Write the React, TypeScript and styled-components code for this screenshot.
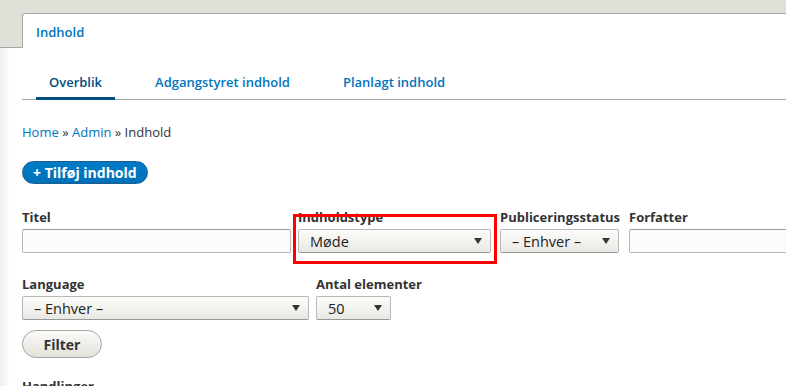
import React from "react";
import styled, { createGlobalStyle } from "styled-components";

const GlobalStyle = createGlobalStyle`
  html, body {
    margin: 0;
    padding: 0;
    background: #ffffff;
    overflow: hidden;
  }
  body {
    font-family: "Open Sans", "DejaVu Sans", sans-serif;
    font-size: 13px;
    color: #333333;
  }
`;

// --- Header ---
const Header = styled.div`
  display: flex;
  background: #e0e0d8;
  padding: 13px 0 0 22px;
  border-bottom: 1px solid #a6a6a6;
`;

const PrimaryTab = styled.a`
  flex: 1;
  height: 35px;
  margin-bottom: -1px;
  display: flex;
  align-items: center;
  padding: 1px 0 0 13px;
  box-sizing: border-box;
  background: #ffffff;
  border-top: 1px solid #a6a6a6;
  border-left: 1px solid #a6a6a6;
  border-top-left-radius: 4px;
  color: #0074bd;
  font-weight: 600;
  text-decoration: none;
`;

// --- Content ---
const Content = styled.div`
  background: linear-gradient(to right, #efefef 0, #ffffff 10px);
  height: 337px;
  padding: 25px 0 0 22px;
  overflow: hidden;
`;

const TabList = styled.div`
  display: flex;
  gap: 27px;
  padding-left: 14px;
  height: 26px;
  border-bottom: 1px solid #a6a6a6;
`;

const SecondaryTab = styled.a<{ $active?: boolean }>`
  display: block;
  padding: 0 13px 5px;
  line-height: 18px;
  margin-bottom: -1px;
  font-weight: 600;
  color: ${(p) => (p.$active ? "#004f80" : "#0074bd")};
  border-bottom: 3px solid ${(p) => (p.$active ? "#004f80" : "transparent")};
  text-decoration: none;
`;

const Breadcrumb = styled.div`
  margin-top: 23px;
  line-height: 18px;
  color: #333333;

  a {
    color: #0074bd;
    text-decoration: none;
  }
`;

const PrimaryButton = styled.button`
  display: block;
  margin-top: 20px;
  height: 23px;
  padding: 0 10px;
  border: 1px solid #1e5c90;
  border-radius: 20px;
  background: linear-gradient(#007bc6, #0071b8);
  color: #ffffff;
  font-family: inherit;
  font-size: 14px;
  font-weight: 700;
  line-height: 20px;
`;

const FilterRow = styled.div<{ $top: number }>`
  display: flex;
  align-items: flex-start;
  margin-top: ${(p) => p.$top}px;
`;

const Field = styled.div<{ $width: number; $gap: number }>`
  position: relative;
  flex: 0 0 auto;
  width: ${(p) => p.$width}px;
  margin-right: ${(p) => p.$gap}px;
`;

const Label = styled.div`
  font-weight: 700;
  line-height: 18px;
  white-space: nowrap;
  color: #333333;
  margin-bottom: 3px;
`;

const TextInput = styled.div`
  box-sizing: border-box;
  height: 24px;
  background: #fcfcfa;
  border: 1px solid #b8b8b8;
  border-top-color: #999999;
  border-radius: 2px;
`;

const SelectBox = styled.div`
  box-sizing: border-box;
  height: 24px;
  display: flex;
  align-items: center;
  justify-content: space-between;
  padding: 0 8px 0 11px;
  background: linear-gradient(#fcfcfa, #e9e9e4);
  border: 1px solid #b8b8b8;
  border-bottom-color: #999999;
  border-radius: 2px;
  color: #222222;
  font-size: 14.5px;
  white-space: nowrap;
`;

const Arrow = styled.svg`
  flex: 0 0 auto;
`;

const Highlight = styled.div`
  position: absolute;
  left: -5px;
  top: 6px;
  width: 204px;
  height: 50px;
  box-sizing: border-box;
  border: 3px solid #ff0000;
  pointer-events: none;
`;

const SecondaryButton = styled.button`
  display: block;
  margin-top: 10px;
  width: 80px;
  height: 28px;
  border: 1px solid #a6a6a6;
  border-radius: 20px;
  background: linear-gradient(#fafaf7, #e3e2dc);
  color: #333333;
  font-family: inherit;
  font-size: 14px;
  font-weight: 700;
`;

const SectionTitle = styled.div`
  margin-top: 19px;
  font-weight: 700;
  line-height: 18px;
`;

function Select({ value }: { value: string }) {
  return (
    <SelectBox>
      <span>{value}</span>
      <Arrow width="8" height="6" viewBox="0 0 8 6">
        <path d="M0 0 L8 0 L4 6 Z" fill="#333" />
      </Arrow>
    </SelectBox>
  );
}

export default function App() {
  return (
    <>
      <GlobalStyle />
      <Header>
        <PrimaryTab>Indhold</PrimaryTab>
      </Header>
      <Content>
        <TabList>
          <SecondaryTab $active>Overblik</SecondaryTab>
          <SecondaryTab>Adgangstyret indhold</SecondaryTab>
          <SecondaryTab>Planlagt indhold</SecondaryTab>
        </TabList>
        <Breadcrumb>
          <a>Home</a> » <a>Admin</a> » Indhold
        </Breadcrumb>
        <PrimaryButton>+ Tilføj indhold</PrimaryButton>

        <FilterRow $top={24}>
          <Field $width={269} $gap={7}>
            <Label>Titel</Label>
            <TextInput />
          </Field>
          <Field $width={193} $gap={9}>
            <Label>Indholdstype</Label>
            <Select value="Møde" />
            <Highlight />
          </Field>
          <Field $width={119} $gap={10}>
            <Label>Publiceringsstatus</Label>
            <Select value="– Enhver –" />
          </Field>
          <Field $width={180} $gap={0}>
            <Label>Forfatter</Label>
            <TextInput />
          </Field>
        </FilterRow>

        <FilterRow $top={22}>
          <Field $width={287} $gap={7}>
            <Label>Language</Label>
            <Select value="– Enhver –" />
          </Field>
          <Field $width={75} $gap={0}>
            <Label>Antal elementer</Label>
            <Select value="50" />
          </Field>
        </FilterRow>

        <SecondaryButton>Filter</SecondaryButton>
        <SectionTitle>Handlinger</SectionTitle>
      </Content>
    </>
  );
}
